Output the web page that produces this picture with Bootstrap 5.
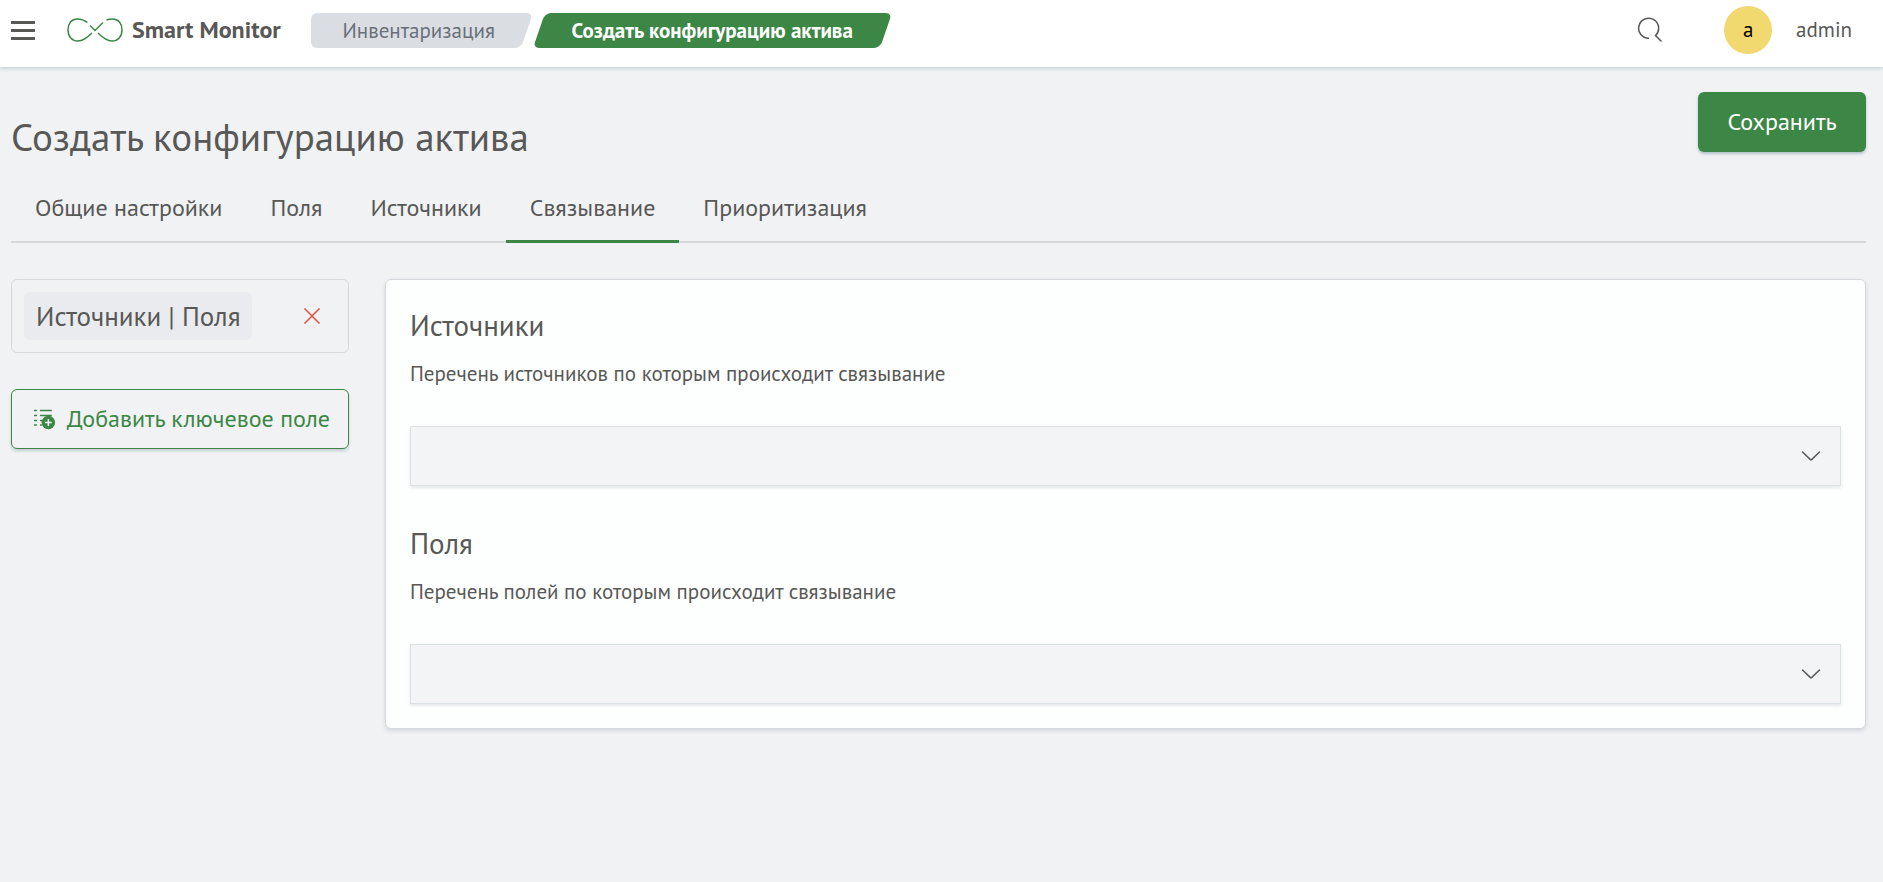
<!DOCTYPE html>
<html lang="ru">
<head>
<meta charset="utf-8">
<meta name="viewport" content="width=device-width, initial-scale=1">
<title>Smart Monitor — Создать конфигурацию актива</title>
<link href="https://cdn.jsdelivr.net/npm/bootstrap@5.3.0/dist/css/bootstrap.min.css" rel="stylesheet">
<style>
  :root { --sm-green: #3d8746; --sm-ink: #585856; --sm-line: #d6d9dc; --sm-bg: #f0f2f4; }
  body { font-family: "PT Sans", Lato, "Noto Sans", sans-serif; background: var(--sm-bg); color: var(--sm-ink); font-size: 24px; line-height: 32px; }
  .topbar { height: 67px; padding: 0 31px 7px 11px; background: #fff; box-shadow: 0 1px 4px #b9c4ca; }
  .plain-btn { border: 0; background: none; padding: 0; color: inherit; display: flex; }
  .brand-link { color: var(--sm-ink); text-decoration: none; font-size: 24px; font-weight: 700; gap: 9px; margin-left: 31px; }
  .crumbs { margin: 0 0 0 30px; gap: 12px; font-size: 21px; list-style: none; padding: 0; }
  .crumb { position: relative; isolation: isolate; height: 35px; line-height: 36px; text-align: center; white-space: nowrap; }
  .crumb a { color: #69707a; text-decoration: none; }
  .crumb::before, .crumb::after { content: ""; position: absolute; inset: 0; z-index: -1; background: #dadee3; border-radius: 6px; }
  .crumb::before { right: 30px; }
  .crumb::after { left: 20px; transform: skewX(-19deg); }
  .crumb-root { width: 216px; }
  .crumb-here { width: 347px; color: #fff; font-weight: 600; }
  .crumb-here::before { display: none; }
  .crumb-here::after { left: 0; background: var(--sm-green); }
  .avatar { width: 48px; height: 48px; border-radius: 50%; background: #f1d86f; color: #000; font-size: 21px; margin: 0 24px 0 61px; }
  .user-name { font-size: 21px; }
  .page { padding: 25px 17px 24px 11px; }
  .page-title { font-size: 39px; line-height: 48px; font-weight: 400; margin: 21px 0 0; }
  .btn-save { background: var(--sm-green); color: #fff; width: 168px; height: 60px; font-size: 24px; border-radius: 6px; box-shadow: 0 2px 3px #b4c2c8; font-weight: 500; padding: 0; }
  .tabs { border-bottom: 2px solid var(--sm-line); margin-top: 15px; }
  .tabs .nav-link { color: var(--sm-ink); padding: 16px 24px; border-bottom: 3px solid transparent; margin-bottom: -2px; line-height: 32px; }
  .tabs .nav-link.active { border-color: var(--sm-green); }
  .layout { gap: 36px; margin-top: 36px; }
  .side { width: 338px; flex: none; gap: 36px; }
  .key-item { border: 1px solid var(--sm-line); border-radius: 6px; padding: 12px 28px 12px 12px; }
  .key-chip { background: #e9ebee; border-radius: 6px; padding: 8px 12px; font-size: 27px; line-height: 32px; white-space: nowrap; }
  .btn-add { border: 1px solid var(--sm-green); color: var(--sm-green); height: 60px; font-size: 24px; border-radius: 6px; padding: 0 18px 0 22px; gap: 11px; white-space: nowrap; box-shadow: 0 2px 3px #c3ced3; }
  .panel { background: #fdfefe; border: 1px solid var(--sm-line); border-radius: 6px; padding: 27px 24px 24px; box-shadow: 0 2px 4px #d3d7dc; min-width: 0; }
  .panel h2 { font-size: 29px; line-height: 36px; font-weight: 400; margin: 0; }
  .panel p { font-size: 21px; line-height: 28px; margin: 17px 0 38px; }
  .field-select { height: 60px; border: 1px solid #dae2e5; border-radius: 0; background-color: #f3f4f6; box-shadow: 0 2px 3px #e6e9eb; background-size: 20px 20px; background-position: right 19px center;
    background-image: url("data:image/svg+xml,%3Csvg xmlns='http://www.w3.org/2000/svg' viewBox='0 0 20 20'%3E%3Cpath d='M1.5 6 9.2 13.4Q10 14.1 10.8 13.4L18.5 6' fill='none' stroke='%23585856' stroke-width='1.5' stroke-linecap='round'/%3E%3C/svg%3E"); }
  .field-group + .field-group { margin-top: 39px; }
</style>
</head>
<body>
<header class="topbar d-flex align-items-center">
  <button class="plain-btn" type="button" aria-label="Меню">
    <svg width="25" height="20" viewBox="0 0 25 20" fill="none" stroke="#585856" stroke-width="3"><path d="M0 2.500H24M0 10.500H24M0 18.500H24"/></svg>
  </button>
  <a class="brand-link d-flex align-items-center" href="#">
    <svg width="56" height="24" viewBox="0 0 56 24" fill="none" stroke="#3d8746" stroke-width="1.500"><path d="M20.500 4.500C17 2 14 1 10.500 1C4.500 1 1 5.500 1 12S5 23 11 23C17 23 21.500 18.500 25 15M23 7.500L28 12.500L36 4.500M39.500 2C42 1 43.500 1 45.500 1C51.500 1 55 5.500 55 12S51 23 45 23C39 23 34.500 18.500 31 15"/></svg>
    <span>Smart Monitor</span>
  </a>
  <nav aria-label="Навигация">
    <ol class="crumbs d-flex">
      <li class="crumb crumb-root"><a href="#">Инвентаризация</a></li>
      <li class="crumb crumb-here" aria-current="page">Создать конфигурацию актива</li>
    </ol>
  </nav>
  <button class="plain-btn ms-auto" type="button" aria-label="Поиск">
    <svg width="26" height="26" viewBox="0 0 26 26" fill="none" stroke="#585856" stroke-width="1.500"><path d="M12 21.200A10 10 0 1 1 18.500 18.500L24.500 24.500"/></svg>
  </button>
  <div class="avatar d-flex align-items-center justify-content-center">a</div>
  <span class="user-name">admin</span>
</header>

<main class="page">
  <div class="d-flex justify-content-between align-items-start">
    <h1 class="page-title">Создать конфигурацию актива</h1>
    <button class="btn btn-save" type="button">Сохранить</button>
  </div>
  <nav class="tabs nav">
    <a class="nav-link" href="#">Общие настройки</a>
    <a class="nav-link" href="#">Поля</a>
    <a class="nav-link" href="#">Источники</a>
    <a class="nav-link active" aria-current="page" href="#">Связывание</a>
    <a class="nav-link" href="#">Приоритизация</a>
  </nav>
  <div class="layout d-flex align-items-start">
    <aside class="side d-flex flex-column">
      <div class="key-item d-flex align-items-center justify-content-between">
        <span class="key-chip">Источники | Поля</span>
        <button class="plain-btn" type="button" aria-label="Удалить">
          <svg width="16" height="16" viewBox="0 0 16 16" stroke="#e0503f" stroke-width="1.500"><path d="M.5.5 15.500 15.500M15.500.5.5 15.500"/></svg>
        </button>
      </div>
      <button class="btn btn-add d-flex align-items-center" type="button">
        <svg width="22" height="22" viewBox="0 0 22 22" fill="none" stroke="#3d8746" stroke-width="1.500"><path d="M0 2.500H3M6 2.500H18M0 7.500H3M6 7.500H18M0 12.500H3M6 12.500H10M0 17H3M6 17H8"/><circle cx="14.500" cy="14.500" r="6.800" fill="#3d8746" stroke="none"/><path d="M14.500 11V18M11 14.500H18" stroke="#f0f2f4"/></svg>
        <span>Добавить ключевое поле</span>
      </button>
    </aside>
    <section class="panel flex-grow-1">
      <div class="field-group">
        <h2><label for="sources">Источники</label></h2>
        <p>Перечень источников по которым происходит связывание</p>
        <select class="form-select field-select" id="sources"></select>
      </div>
      <div class="field-group">
        <h2><label for="fields">Поля</label></h2>
        <p>Перечень полей по которым происходит связывание</p>
        <select class="form-select field-select" id="fields"></select>
      </div>
    </section>
  </div>
</main>
<script src="https://cdn.jsdelivr.net/npm/bootstrap@5.3.0/dist/js/bootstrap.bundle.min.js"></script>
</body>
</html>
